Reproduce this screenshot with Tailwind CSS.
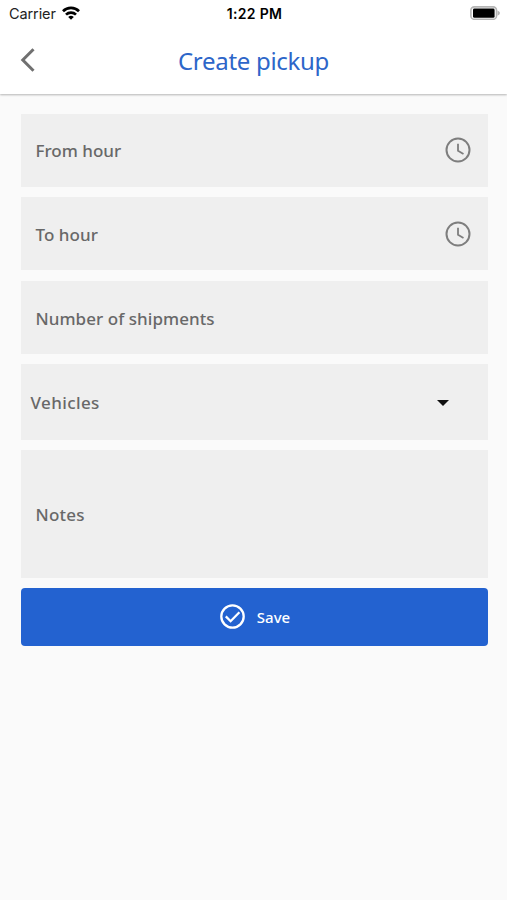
<!DOCTYPE html>
<html lang="en">
<head>
<meta charset="utf-8">
<title>Create pickup</title>
<script src="https://cdn.jsdelivr.net/npm/@tailwindcss/browser@4"></script>
</head>
<body class="bg-[#fafafa] h-[900px] overflow-hidden font-['Noto_Sans',sans-serif] text-[#686868]">
<header class="h-[93.5px] bg-white shadow-[0_1px_2px_rgba(0,0,0,0.28)]">
  <div class="h-7 grid grid-cols-3 items-center pl-[9px] pr-[7px] text-black font-['Inter',sans-serif]">
    <div class="flex items-center gap-[6px]">
      <span class="text-[14.5px] leading-7 text-[#222] tracking-[-0.1px]">Carrier</span>
      <svg class="w-[18px] h-[14px] -mt-[2px]" viewBox="0 0 18 14" fill="none" stroke="#000" stroke-width="2.7"><path d="M1 5.2a11.4 11.4 0 0 1 16 0M4 8.6a7.1 7.1 0 0 1 10 0"/><path d="M9 13.8 6.2 11a4 4 0 0 1 5.6 0z" fill="#000" stroke="none"/></svg>
    </div>
    <span class="text-center text-[14px] tracking-[0.3px] leading-7 font-semibold whitespace-nowrap">1:22 PM</span>
    <svg class="justify-self-end w-[30px] h-[14px] -mt-[2px]" viewBox="0 0 30 14"><rect x=".9" y=".9" width="25.6" height="12.4" rx="3.4" fill="#fff" stroke="#b5b5b5" stroke-width="1.6"/><rect x="3" y="2.5" width="21.6" height="9.3" rx="1.4"/><path d="M27.5 4.5q2.5 1 2.5 2.6t-2.5 2.6z" fill="#b5b5b5"/></svg>
  </div>
  <div class="h-[65px] grid grid-cols-[50px_1fr_50px] items-center">
    <svg class="ml-5 w-4 h-6 -mt-[2px]" viewBox="0 0 16 24" fill="none" stroke="#707070" stroke-width="3"><path d="M13.5 1.2 2.8 12l10.7 10.8"/></svg>
    <h1 class="text-center text-[24px] leading-8 text-[#2d66c9] tracking-[-0.3px]">Create pickup</h1>
  </div>
</header>
<main class="pl-[20.5px] pr-[19.5px] pt-5 flex flex-col text-[17px] font-medium tracking-[0.05px]">
  <div class="h-[73px] mb-[10.5px] bg-[#efefef] flex items-center justify-between pl-[15px] pr-[16.5px]">
    <span class="pt-[2px] tracking-[0px]">From hour</span>
    <svg class="w-[26px] h-[26px]" viewBox="0 0 26 26" fill="none" stroke="#7e7e7e" stroke-width="2"><circle cx="13" cy="13" r="11.5"/><path d="M13 6.7v7l5.5 3.3" stroke-width="1.8"/></svg>
  </div>
  <div class="h-[73px] mb-[10.5px] bg-[#efefef] flex items-center justify-between pl-[15px] pr-[16.5px]">
    <span class="pt-[2px]">To hour</span>
    <svg class="w-[26px] h-[26px]" viewBox="0 0 26 26" fill="none" stroke="#7e7e7e" stroke-width="2"><circle cx="13" cy="13" r="11.5"/><path d="M13 6.7v7l5.5 3.3" stroke-width="1.8"/></svg>
  </div>
  <div class="h-[73.5px] mb-[10px] bg-[#efefef] flex items-center pl-[15px]"><span class="pt-[2px]">Number of shipments</span></div>
  <div class="h-[76px] mb-[10px] bg-[#efefef] flex items-center justify-between pl-[10px] pr-[38.5px]">
    <span class="pt-[2px] tracking-[0.4px]">Vehicles</span>
    <svg class="w-3 h-[6px] mt-px" viewBox="0 0 12 6"><path d="M0 0h12L6 6z" fill="#111"/></svg>
  </div>
  <div class="h-[127.5px] mb-[10px] bg-[#efefef] flex items-center pl-[15px]"><span class="pt-[2px] tracking-[0.2px]">Notes</span></div>
  <button class="h-[58.5px] rounded-[4px] bg-[#2362d0] text-white flex items-center justify-center gap-3 text-[15px] tracking-normal pl-[2px]">
    <svg class="w-[25px] h-[25px]" viewBox="0 0 25 25" fill="none" stroke="#fff" stroke-width="2.3"><circle cx="12.5" cy="12.5" r="11.2"/><path d="m5.8 12.4 4.8 4.8 8.8-9"/></svg>
    <span>Save</span>
  </button>
</main>
</body>
</html>
